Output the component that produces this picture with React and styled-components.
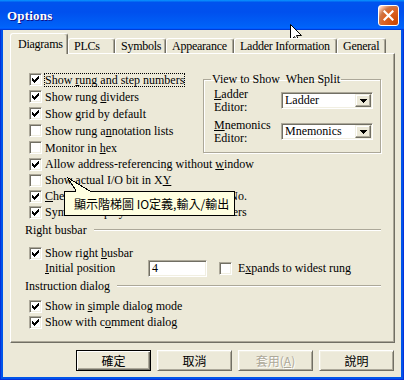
import React from 'react';
import styled, { createGlobalStyle } from 'styled-components';

const GlobalStyle = createGlobalStyle`
  html, body {
    margin: 0;
    padding: 0;
    background: #fff;
  }
  body {
    font-family: "Liberation Serif", "Times New Roman", serif;
    font-size: 12px;
    color: #000;
  }
`;

const cjk = `"Noto Sans CJK TC", "Noto Sans CJK SC", sans-serif`;

const Window = styled.div`
  position: relative;
  width: 404px;
  height: 380px;
  box-sizing: border-box;
  display: flex;
  flex-direction: column;
  background: #0055ea;
  box-shadow: inset 1px 0 #0831d9, inset -1px 0 #0831d9, inset 0 -1px #0831d9;
  overflow: hidden;
`;

const TitleBar = styled.div`
  height: 30px;
  flex: none;
  display: flex;
  align-items: center;
  justify-content: space-between;
  padding: 0 5px 0 7px;
  background: linear-gradient(180deg, #0997ff, #0053ee 8%, #0050ee 40%, #0062f8 88%, #0066ff 93%, #005bff 95%, #003dd7 96%, #003dd7);
`;

const Title = styled.span`
  color: #fff;
  font-weight: bold;
  font-size: 13px;
  letter-spacing: 0.2px;
  text-shadow: 1px 1px #0f1089;
  margin-top: 1px;
`;

const CloseButton = styled.div`
  width: 21px;
  height: 21px;
  box-sizing: border-box;
  margin-top: 1px;
  border: 1px solid #fff;
  border-radius: 3px;
  background: radial-gradient(circle at 90% 90%, #cc4600 0%, #dc6527 55%, #cd7546 70%, #ffccb2 90%, #fff 100%);
  display: flex;
  align-items: center;
  justify-content: center;
`;

const Body = styled.div`
  flex: 1;
  margin: 0 3px 3px;
  padding: 3px 6px 0 7px;
  background: #ece9d8;
  display: flex;
  flex-direction: column;
`;

const TabStrip = styled.div`
  display: flex;
  align-items: flex-end;
  height: 20px;
  position: relative;
  z-index: 1;
`;

const Tab = styled.div`
  box-sizing: border-box;
  width: ${p => p.$w}px;
  height: ${p => (p.$active ? 21 : 15)}px;
  margin-bottom: ${p => (p.$active ? -1 : 0)}px;
  padding: ${p => (p.$active ? '3px 0 0 7px' : '0 0 0 5px')};
  background: #ece9d8;
  border-top: 1px solid #fff;
  border-left: 1px solid #fff;
  border-right: 1px solid #716f64;
  box-shadow: inset -1px 0 #aca899;
  border-radius: 3px 3px 0 0;
  line-height: 14px;
  letter-spacing: -0.25px;
  white-space: nowrap;
  overflow: hidden;
`;

const Panel = styled.div`
  box-sizing: border-box;
  height: 290px;
  border: 1px solid;
  border-color: #fff #716f64 #716f64 #fff;
  box-shadow: inset -1px -1px #aca899;
  padding: 17px 13px 0 14px;
`;

const TopSection = styled.div`
  display: flex;
  align-items: flex-start;
`;

const Column = styled.div`
  flex: 1;
`;

const CheckRow = styled.div`
  display: flex;
  align-items: center;
  height: ${p => p.$h || 17}px;
  margin-top: ${p => p.$mt || 0}px;
  padding-left: 4px;
  gap: 3px;
  white-space: nowrap;
  line-height: 14px;
`;

const Box = styled.span`
  flex: none;
  width: 13px;
  height: 13px;
  box-sizing: border-box;
  background: #fff;
  border: 1px solid;
  border-color: #aca899 #fff #fff #aca899;
  box-shadow: inset 1px 1px #716f64, inset -1px -1px #f1efe2;
  display: block;
`;

const Label = styled.span`
  ${p => p.$focus && `
    border: 1px dotted #000;
    margin-left: -1px;
    line-height: 12px;
  `}
`;

const GroupBox = styled.fieldset`
  width: 178px;
  box-sizing: border-box;
  margin: 1px 0 0;
  padding: 0 6px 8px 10px;
  border: 1px solid #aca899;
  box-shadow: 1px 1px #fff, inset 1px 1px #fff;
  flex: none;
`;

const Legend = styled.legend`
  padding: 0 1px;
  margin-left: -3px;
  line-height: 14px;
`;

const FieldRow = styled.div`
  display: flex;
  align-items: center;
  margin-top: ${p => p.$mt}px;
`;

const FieldLabel = styled.div`
  width: 67px;
  line-height: 12.5px;
`;

const Select = styled.div`
  width: 92px;
  height: 17px;
  box-sizing: border-box;
  background: #fff;
  border: 1px solid;
  border-color: #aca899 #fff #fff #aca899;
  box-shadow: inset 1px 1px #716f64, inset -1px -1px #f1efe2;
  display: flex;
  align-items: center;
  padding: 0 1px 0 3px;
  line-height: 13px;
`;

const SelectText = styled.span`
  flex: 1;
`;

const DropButton = styled.span`
  width: 16px;
  height: 13px;
  box-sizing: border-box;
  background: #ece9d8;
  border: 1px solid;
  border-color: #f1efe2 #716f64 #716f64 #f1efe2;
  box-shadow: inset -1px -1px #aca899, inset 1px 1px #fff;
  display: flex;
  align-items: center;
  justify-content: center;
`;

const SectionHeader = styled.div`
  display: flex;
  align-items: center;
  gap: 7px;
  height: 14px;
  line-height: 14px;
  margin-top: ${p => p.$mt}px;
  white-space: nowrap;
`;

const Etch = styled.div`
  flex: 1;
  height: 0;
  border-top: 1px solid #aca899;
  border-bottom: 1px solid #fff;
`;

const InputRow = styled.div`
  display: flex;
  align-items: center;
  height: 17px;
  padding-left: 20px;
  white-space: nowrap;
`;

const InputLabel = styled.span`
  width: 103px;
`;

const TextInput = styled.div`
  width: 59px;
  height: 17px;
  box-sizing: border-box;
  background: #fff;
  border: 1px solid;
  border-color: #aca899 #fff #fff #aca899;
  box-shadow: inset 1px 1px #716f64, inset -1px -1px #f1efe2;
  padding-left: 3px;
  line-height: 15px;
  margin-right: 12px;
`;

const InlineCheck = styled.span`
  display: flex;
  align-items: center;
  gap: 6px;
`;

const ButtonRow = styled.div`
  display: flex;
  justify-content: flex-end;
  gap: 6px;
  margin-top: 7px;
  padding-right: 1px;
`;

const Button = styled.div`
  width: 75px;
  height: 21px;
  box-sizing: border-box;
  display: flex;
  align-items: center;
  justify-content: center;
  font-family: ${cjk};
  font-size: 12px;
  background: #ece9d8;
  border: 1px solid;
  border-color: ${p => (p.$default ? '#000' : '#fff #716f64 #716f64 #fff')};
  box-shadow: ${p =>
    p.$default
      ? 'inset 1px 1px #fff, inset -1px -1px #716f64, inset -2px -2px #aca899'
      : 'inset 1px 1px #f1efe2, inset -1px -1px #aca899'};
  color: ${p => (p.$disabled ? '#aca899' : '#000')};
  text-shadow: ${p => (p.$disabled ? '1px 1px #fff' : 'none')};
`;

const Tooltip = styled.div`
  position: absolute;
  left: 64px;
  top: 191px;
  width: 171px;
  height: 25px;
  box-sizing: border-box;
  background: #ffffe1;
  border: 1px solid #000;
  font-family: ${cjk};
  font-size: 12px;
  line-height: 23px;
  padding-left: 9px;
  white-space: nowrap;
`;

const Tail = styled.svg`
  position: absolute;
  left: 60px;
  top: 174px;
  z-index: ${p => p.$z || 0};
`;

const Cursor = styled.svg`
  position: absolute;
  left: 290px;
  top: 24px;
`;

const Check = () => (
  <svg width="11" height="11" viewBox="0 0 11 11" shapeRendering="crispEdges" style={{ display: 'block' }}>
    <path
      fill="#000"
      d="M2 4h1v3h-1z M3 5h1v3h-1z M4 6h1v3h-1z M5 5h1v3h-1z M6 4h1v3h-1z M7 3h1v3h-1z M8 2h1v3h-1z"
    />
  </svg>
);

const CheckBox = ({ checked }) => <Box>{checked && <Check />}</Box>;

const Arrow = () => (
  <svg width="7" height="4" viewBox="0 0 7 4" shapeRendering="crispEdges">
    <path fill="#000" d="M0 0h7v1h-7z M1 1h5v1h-5z M2 2h3v1h-3z M3 3h1v1h-1z" />
  </svg>
);

const tabs = [
  { label: 'Diagrams', w: 58, active: true },
  { label: 'PLCs', w: 47 },
  { label: 'Symbols', w: 51 },
  { label: 'Appearance', w: 68 },
  { label: 'Ladder Information', w: 103 },
  { label: 'General', w: 49 },
];

const topRows = [
  { checked: true, focus: true, text: <>Show <u>r</u>ung and step numbers</> },
  { checked: true, text: <>Show rung <u>d</u>ividers</> },
  { checked: true, text: <>Show <u>g</u>rid by default</> },
  { checked: false, text: <>Show rung a<u>n</u>notation lists</> },
  { checked: false, text: <>Monitor in <u>h</u>ex</> },
];

const moreRows = [
  { checked: true, text: <>Allow address-referencing without <u>w</u>indow</> },
  { checked: false, text: <>Show actual I/O bit in X<u>Y</u></> },
  { checked: true, text: <><u>C</u>heck duplicate coil in the same rung No.</> },
  { checked: true, text: <>Symbols displayed in the element headers</> },
];

export default function App() {
  return (
    <>
      <GlobalStyle />
      <Window>
        <TitleBar>
          <Title>Options</Title>
          <CloseButton>
            <svg width="11" height="11" viewBox="0 0 11 11">
              <path d="M1.5 1.5 L9.5 9.5 M9.5 1.5 L1.5 9.5" stroke="#fff" strokeWidth="2.2" strokeLinecap="square" />
            </svg>
          </CloseButton>
        </TitleBar>

        <Body>
          <TabStrip>
            {tabs.map(t => (
              <Tab key={t.label} $w={t.w} $active={t.active}>
                {t.label}
              </Tab>
            ))}
          </TabStrip>

          <Panel>
            <TopSection>
              <Column>
                {topRows.map((r, i) => (
                  <CheckRow key={i}>
                    <CheckBox checked={r.checked} />
                    <Label $focus={r.focus}>{r.text}</Label>
                  </CheckRow>
                ))}
              </Column>
              <GroupBox>
                <Legend>View to Show&nbsp; When Split</Legend>
                <FieldRow $mt={2}>
                  <FieldLabel>
                    <u>L</u>adder<br />Editor:
                  </FieldLabel>
                  <Select>
                    <SelectText>Ladder</SelectText>
                    <DropButton><Arrow /></DropButton>
                  </Select>
                </FieldRow>
                <FieldRow $mt={6}>
                  <FieldLabel>
                    <u>M</u>nemonics<br />Editor:
                  </FieldLabel>
                  <Select>
                    <SelectText>Mnemonics</SelectText>
                    <DropButton><Arrow /></DropButton>
                  </Select>
                </FieldRow>
              </GroupBox>
            </TopSection>

            {moreRows.map((r, i) => (
              <CheckRow key={i} $h={16}>
                <CheckBox checked={r.checked} />
                <Label>{r.text}</Label>
              </CheckRow>
            ))}

            <SectionHeader $mt={3}>
              Right busbar
              <Etch />
            </SectionHeader>
            <CheckRow $h={14} $mt={9}>
              <CheckBox checked />
              <Label>Show right <u>b</u>usbar</Label>
            </CheckRow>
            <InputRow>
              <InputLabel><u>I</u>nitial position</InputLabel>
              <TextInput>4</TextInput>
              <InlineCheck>
                <CheckBox checked={false} />
                <span>E<u>x</u>pands to widest rung</span>
              </InlineCheck>
            </InputRow>

            <SectionHeader $mt={2}>
              Instruction dialog
              <Etch />
            </SectionHeader>
            <CheckRow $h={16} $mt={5}>
              <CheckBox checked />
              <Label>Show in <u>s</u>imple dialog mode</Label>
            </CheckRow>
            <CheckRow $h={16}>
              <CheckBox checked />
              <Label>Show with c<u>o</u>mment dialog</Label>
            </CheckRow>
          </Panel>

          <ButtonRow>
            <Button $default>確定</Button>
            <Button>取消</Button>
            <Button $disabled>套用(<u>A</u>)</Button>
            <Button>說明</Button>
          </ButtonRow>
        </Body>

        <Tail width="40" height="20" viewBox="0 0 40 20" shapeRendering="crispEdges">
          <polygon points="7.5,3.5 16.5,17.5 30.5,17.5" fill="#ffffe1" stroke="#000" strokeWidth="1" />
        </Tail>
        <Tooltip>顯示階梯圖 IO定義,輸入/輸出</Tooltip>
        <Tail width="40" height="20" viewBox="0 0 40 20" $z={2}>
          <polygon points="16,17 30,17 30,19 16,19" fill="#ffffe1" />
        </Tail>

        <Cursor width="13" height="20" viewBox="0 0 13 20">
          <path
            d="M0.5 0.5 L0.5 16.5 L4.5 12.5 L7.5 18.5 L9.5 17.5 L6.5 11.5 L11.5 11.5 Z"
            fill="#fff"
            stroke="#000"
            strokeWidth="1"
            strokeLinejoin="miter"
          />
        </Cursor>
      </Window>
    </>
  );
}
